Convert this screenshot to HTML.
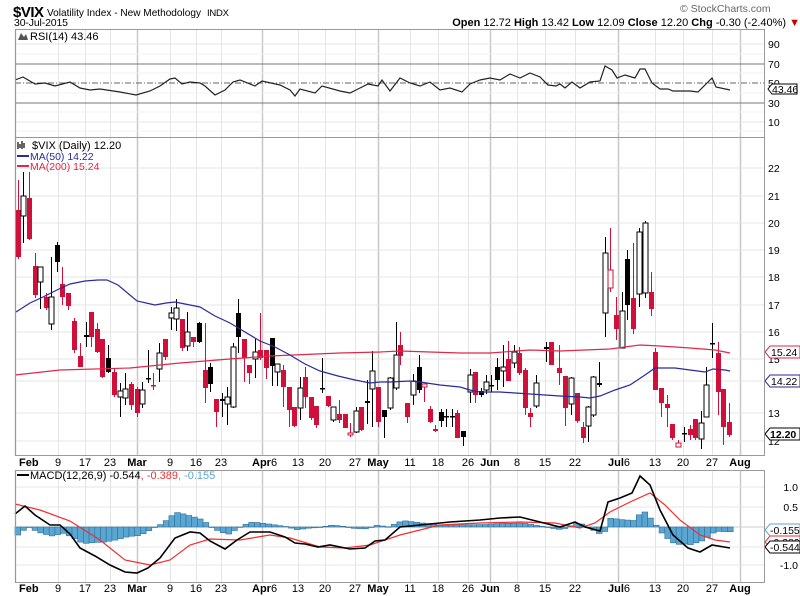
<!DOCTYPE html>
<html><head><meta charset="utf-8"><style>
html,body{margin:0;padding:0;background:#fff;width:800px;height:596px;overflow:hidden}
svg{display:block;font-family:"Liberation Sans",sans-serif}
</style></head><body>
<svg id="c" width="800" height="596" xmlns="http://www.w3.org/2000/svg">
<text x="13" y="17" font-size="15" font-weight="bold" textLength="31">$VIX</text>
<text x="47" y="16" font-size="10.5" textLength="154" lengthAdjust="spacingAndGlyphs">Volatility Index - New Methodology</text>
<text x="207" y="16" font-size="9.5" textLength="22">INDX</text>
<text x="14" y="26" font-size="10.5" textLength="54">30-Jul-2015</text>
<text x="680" y="12" font-size="10.5" fill="#666">© StockCharts.com</text>
<text x="800" y="26" font-size="11" text-anchor="end"><tspan font-weight="bold">Open</tspan> 12.72 <tspan font-weight="bold">High</tspan> 13.42 <tspan font-weight="bold">Low</tspan> 12.09 <tspan font-weight="bold">Close</tspan> 12.20 <tspan font-weight="bold">Chg</tspan> -0.30 (-2.40%) <tspan fill="#c00">▼</tspan></text>
<g id="g"></g>
</svg>
<script>
var G=document.getElementById('g'),h='';
function L(x1,y1,x2,y2,c,w,d){h+='<line x1="'+x1+'" y1="'+y1+'" x2="'+x2+'" y2="'+y2+'" stroke="'+c+'" stroke-width="'+(w||1)+'"'+(d?' stroke-dasharray="'+d+'"':'')+'/>';}
function T(x,y,s,o){h+='<text x="'+x+'" y="'+y+'" font-size="'+(o&&o.fs||11)+'"'+(o&&o.b?' font-weight="bold"':'')+(o&&o.a?' text-anchor="'+o.a+'"':'')+' fill="'+(o&&o.c||'#000')+'">'+s+'</text>';}
function P(pts,c,w){h+='<polyline fill="none" stroke="'+c+'" stroke-width="'+(w||1)+'" points="'+pts.map(function(p){return p.join(',')}).join(' ')+'"/>';}
var R=764,Lf=15;
var dates=[[15,'Feb',1],[58,'9'],[85,'17'],[110,'23'],[137,'Mar',1],[170,'9'],[196,'16'],[221,'23'],[262,'Apr',1],[298,'13'],[325,'20'],[355,'27'],[378,'May',1],[410,'11'],[438,'18'],[468,'26'],[490,'Jun',1],[517,'8'],[545,'15'],[575,'22'],[618,'Jul',1],[655,'13'],[683,'20'],[712,'27'],[740,'Aug',1]];
var panels=[[29,137],[137,455],[470,582]];
panels.forEach(function(p){dates.forEach(function(d){L(d[0]+.5,p[0],d[0]+.5,p[1],d[2]?'#c8c8c8':'#e4e4e4',d[2]?1.5:1);});});
[44,122].forEach(function(y){L(Lf,y,R,y,'#e4e4e4');});
[54,73,93,112,131].forEach(function(y){L(Lf,y,R,y,'#f0f0f0');});
L(Lf,64,R,64,'#777');L(Lf,103,R,103,'#777');L(Lf,83,R,83,'#666',1,'6,2,1,2');
[[90,48],[70,68],[50,87],[30,107],[10,126]].forEach(function(a){T(768,a[1],a[0],{fs:10.5});});
var rsi=[[15,80],[23,77],[35,84],[45,83],[55,86],[70,82],[80,88],[90,90],[100,89],[120,92],[136,95],[150,91],[160,86],[170,79],[175,78],[182,84],[190,82],[200,83],[205,86],[215,95],[225,90],[233,82],[240,80],[255,86],[262,81],[280,85],[290,90],[295,96],[300,89],[315,93],[322,86],[340,91],[350,93],[360,88],[368,84],[378,86],[382,80],[390,91],[400,78],[410,83],[420,86],[430,82],[440,90],[450,88],[462,92],[470,84],[480,80],[490,78],[500,80],[510,74],[520,78],[530,73],[540,77],[548,85],[556,86],[560,84],[565,88],[572,82],[580,88],[590,82],[600,81],[605,66],[612,70],[617,78],[625,75],[635,78],[640,69],[645,69],[652,83],[660,89],[668,89],[673,91],[690,91],[698,92],[712,78],[716,87],[730,90]];
P(rsi,'#222',1.2);
h+='<path d="M768 89 l4 -5 h25 v10 h-25z" fill="#fff" stroke="#000"/>';T(772,93,'43.46',{fs:10.5});
T(30,40,'RSI(14) 43.46',{fs:11});h+='<path d="M18 40 l3 -7 l3 4 l2 -3 l2 6z" fill="#555"/>';
var gy=[[22,168],[21,196],[20,223],[19,250],[18,277],[17,305],[16,332],[15,359],[14,381],[13,413],[12,441]];
gy.forEach(function(a){L(Lf,a[1],R,a[1],'#e4e4e4');T(768,a[1]+4,a[0],{fs:10.5});});
var ma50=[[16,312],[30,303],[43,297],[57,290],[70,284],[85,281],[98,280],[107,280],[118,285],[137,301],[155,305],[166,303],[175,302],[190,305],[200,307],[215,316],[230,323],[245,332],[260,341],[275,347],[290,355],[305,364],[320,371],[338,376],[355,380],[370,383],[380,382],[390,382],[410,381],[420,382],[440,385],[460,387],[470,390],[480,392],[500,392],[530,394],[560,396],[580,397],[590,398],[600,396],[615,390],[630,385],[645,375],[655,368],[675,368],[690,370],[705,372],[713,369],[725,370],[730,371]];
var ma200=[[15,375],[60,370],[130,368],[180,363],[230,359],[270,356],[340,353],[380,352],[400,351],[430,352],[460,353],[490,353],[530,350],[560,351],[610,349],[640,345],[660,346],[690,348],[715,350],[730,353]];
var C=[[18,'r',210,257,180,259],[23,'w',196,216,172,243],[29,'r',198,239,172,240],[35,'r',266,295,253,298],[40,'w',267,282,267,309],[46,'r',297,308,293,310],[51,'w',297,324,257,330],[57,'k',245,262,242,272],[62,'r',284,297,267,305],[68,'r',293,306,293,310],[74,'r',321,350,318,353],[80,'r',356,367,343,367],[86,'k',335,337,322,347],[91,'r',312,337,312,347],[97,'r',329,352,323,353],[102,'r',339,377,339,378],[108,'k',358,372,345,373],[114,'r',372,395,368,397],[120,'w',391,397,383,417],[125,'w',389,398,373,405],[131,'r',384,405,382,410],[137,'r',389,413,387,417],[142,'w',390,404,382,408],[148,'k',378,379,350,383],[153,'r',385,386,373,390],[159,'w',353,369,343,382],[165,'r',339,357,339,360],[171,'w',313,318,307,330],[176,'w',308,319,299,331],[182,'r',319,348,319,351],[187,'w',332,346,312,351],[193,'r',337,342,337,347],[199,'k',323,342,322,343],[205,'r',370,388,323,403],[210,'k',367,384,363,392],[216,'r',399,412,399,427],[222,'k',399,401,393,417],[227,'w',397,404,387,425],[233,'w',347,407,343,408],[238,'k',313,337,299,353],[244,'r',339,358,339,382],[249,'r',365,373,365,384],[255,'w',352,359,339,378],[260,'r',350,358,313,360],[266,'r',350,368,350,379],[272,'k',338,366,338,386],[277,'w',364,372,364,386],[283,'r',370,387,365,407],[289,'r',387,410,387,427],[294,'r',407,426,407,427],[300,'w',388,408,377,420],[305,'r',377,397,367,408],[311,'r',397,418,397,420],[316,'r',406,425,406,428],[322,'k',388,389,358,393],[328,'r',396,406,396,407],[333,'w',407,420,407,422],[339,'r',414,420,400,423],[345,'r',414,428,414,428],[350,'h',433,435,423,437],[356,'w',411,432,407,433],[361,'r',407,430,407,431],[367,'k',401,403,380,424],[372,'w',371,389,351,427],[378,'r',387,422,387,427],[384,'k',410,417,410,438],[390,'w',378,408,377,410],[396,'w',355,388,322,390],[400,'r',345,356,332,365],[407,'r',403,417,403,423],[413,'w',381,395,374,405],[419,'k',367,390,355,393],[424,'h',384,387,384,402],[430,'r',409,422,406,423],[435,'r',429,431,425,432],[441,'k',412,421,409,427],[446,'k',416,417,409,427],[452,'k',416,417,409,427],[457,'r',413,438,410,438],[463,'k',431,437,431,446],[470,'w',375,392,369,403],[475,'r',372,395,372,403],[481,'k',391,395,388,397],[486,'w',382,390,375,394],[491,'k',385,386,375,392],[497,'k',367,380,358,390],[503,'w',367,371,345,387],[508,'r',359,381,341,381],[514,'w',352,363,345,368],[519,'r',353,373,347,375],[525,'r',370,408,368,415],[530,'r',413,417,408,427],[536,'w',383,406,375,408],[546,'k',347,349,342,362],[551,'r',342,365,342,365],[559,'r',368,373,345,385],[565,'r',376,408,376,426],[571,'w',378,404,377,415],[577,'r',393,421,393,423],[583,'r',427,438,422,443],[588,'w',407,426,406,442],[593,'w',377,415,376,417],[599,'k',383,385,362,387],[605,'w',253,313,237,337],[610,'h',270,288,228,292],[616,'r',315,329,297,340],[622,'w',311,348,292,348],[627,'k',259,305,250,320],[633,'r',298,329,243,334],[639,'w',232,294,228,307],[645,'w',223,293,221,298],[651,'r',292,309,272,316],[655,'r',352,390,348,390],[661,'r',388,403,388,417],[667,'r',404,408,395,427],[672,'r',424,438,424,440],[678,'h',443,447,440,447],[684,'k',433,434,427,442],[690,'r',429,435,425,440],[695,'r',419,438,419,440],[701,'w',423,439,411,449],[706,'w',385,417,367,417],[712,'k',343,344,323,358],[718,'r',353,392,342,415],[723,'r',389,427,389,445],[729,'r',422,435,403,437]];
C.forEach(function(c){var x=c[0],red=c[1]=='r'||c[1]=='h',col=red?'#d0103a':'#000';L(x+.5,c[4],x+.5,c[5],col,1);
var hh=Math.max(c[3]-c[2],1.5);var f=c[1]=='r'?'#d0103a':c[1]=='k'?'#000':'#fff';
h+='<rect x="'+(x-2)+'" y="'+c[2]+'" width="5" height="'+hh+'" fill="'+f+'" stroke="'+col+'" stroke-width="'+(c[1]=='r'||c[1]=='k'?0:1)+'"/>';});
P(ma200,'#e0284a',1.2);P(ma50,'#2a2a9a',1.2);
h+='<path d="M765 352 l5 -6 h30 v12 h-30z" fill="#fff" stroke="#e0284a"/>';T(771,356,'15.24',{fs:10.5});
h+='<path d="M765 381 l5 -6 h30 v12 h-30z" fill="#fff" stroke="#2a2a9a"/>';T(771,385,'14.22',{fs:10.5});
h+='<path d="M765 434 l5 -6 h30 v12 h-30z" fill="#fff" stroke="#000"/>';T(770,438,'12.20',{fs:10.5,b:1});
T(32,149,'$VIX (Daily) 12.20');h+='<path d="M18 142 v7 M20 144 v4 M22 141 v8 M24 143 v5" stroke="#333" stroke-width="1.5"/>';
L(17,156,29,156,'#2a2a9a',2);T(30,160,'MA(50) 14.22',{fs:10.5,c:'#2a2a9a'});
L(17,166,29,166,'#e0284a',2);T(30,170,'MA(200) 15.24',{fs:10.5,c:'#e0284a'});
[487,507,547,565].forEach(function(y){L(Lf,y,R,y,'#e4e4e4');});L(Lf,527,R,527,'#ccc');
[['1.0',491],['0.5',511],['0.0',531],['-1.0',569]].forEach(function(a){T(798,a[1],a[0],{fs:10.5,a:'end'});});
var macd=[[15,514],[25,506],[35,515],[50,525],[60,525],[70,534],[80,548],[95,556],[110,565],[125,572],[137,573],[148,568],[160,558],[175,538],[190,532],[200,533],[210,541],[225,549],[237,540],[250,532],[270,532],[285,537],[295,543],[305,544],[318,547],[330,545],[350,549],[365,548],[375,541],[385,540],[400,527],[420,525],[450,522],[480,520],[500,518],[520,517],[540,522],[560,527],[575,522],[585,527],[600,531],[608,502],[620,498],[632,493],[640,476],[650,485],[660,510],[673,535],[688,548],[700,552],[712,545],[730,548]];
var sig=[[15,504],[40,510],[70,521],[100,540],[125,560],[150,565],[170,560],[190,545],[210,539],[240,540],[270,535],[290,538],[320,547],[345,548],[370,545],[400,535],[440,525],[480,523],[520,522],[555,523],[580,528],[595,523],[610,512],[630,502],[650,493],[665,505],[680,520],[700,535],[715,540],[730,542]];
function I(a,x){for(var i=1;i<a.length;i++){if(x<=a[i][0]){var t=(x-a[i-1][0])/(a[i][0]-a[i-1][0]);return a[i-1][1]+t*(a[i][1]-a[i-1][1]);}}return a[a.length-1][1];}
for(var x=15;x<733;x+=5.7){var d=(I(macd,x)-I(sig,x))*0.8;var y1=527+d;
h+='<rect x="'+x.toFixed(1)+'" y="'+Math.min(527,y1).toFixed(1)+'" width="5.7" height="'+Math.max(Math.abs(d),0.5).toFixed(1)+'" fill="#5aa6d2" stroke="#2f6f98" stroke-width="0.6"/>';}
P(sig,'#f03030',1.2);P(macd,'#000',1.6);
h+='<path d="M765 530 l5 -6 h30 v12 h-30z" fill="#fff" stroke="#5aa6d2"/>';T(770,534,'-0.155',{fs:10.5});
h+='<path d="M765 542 l5 -6 h30 v12 h-30z" fill="#fff" stroke="#f03030"/>';T(770,546,'-0.389',{fs:10.5});
h+='<path d="M765 547 l5 -6 h30 v12 h-30z" fill="#fff" stroke="#000"/>';T(770,551,'-0.544',{fs:10.5});
L(17,475,29,475,'#000',2);h+='<text x="30" y="479" font-size="11">MACD(12,26,9) -0.544<tspan fill="#f03030">, -0.389</tspan><tspan fill="#5aa6d2">, -0.155</tspan></text>';
panels.forEach(function(p){h+='<rect x="'+Lf+'.5" y="'+p[0]+'.5" width="'+(R-Lf)+'" height="'+(p[1]-p[0])+'" fill="none" stroke="#999"/>';});
[466,592].forEach(function(y){dates.forEach(function(d){
if(d[1]=='Apr'||d[1]=='Jul'){h+='<text x="'+(d[0]-10)+'" y="'+y+'" font-size="11"><tspan font-weight="bold">'+d[1]+'</tspan>6</text>';}
else T(d[0]+(d[0]==15?4:0),y,d[1],{fs:11,b:d[2],a:d[0]==15?'start':'middle'});});});
G.innerHTML=h;
</script>
</body></html>
